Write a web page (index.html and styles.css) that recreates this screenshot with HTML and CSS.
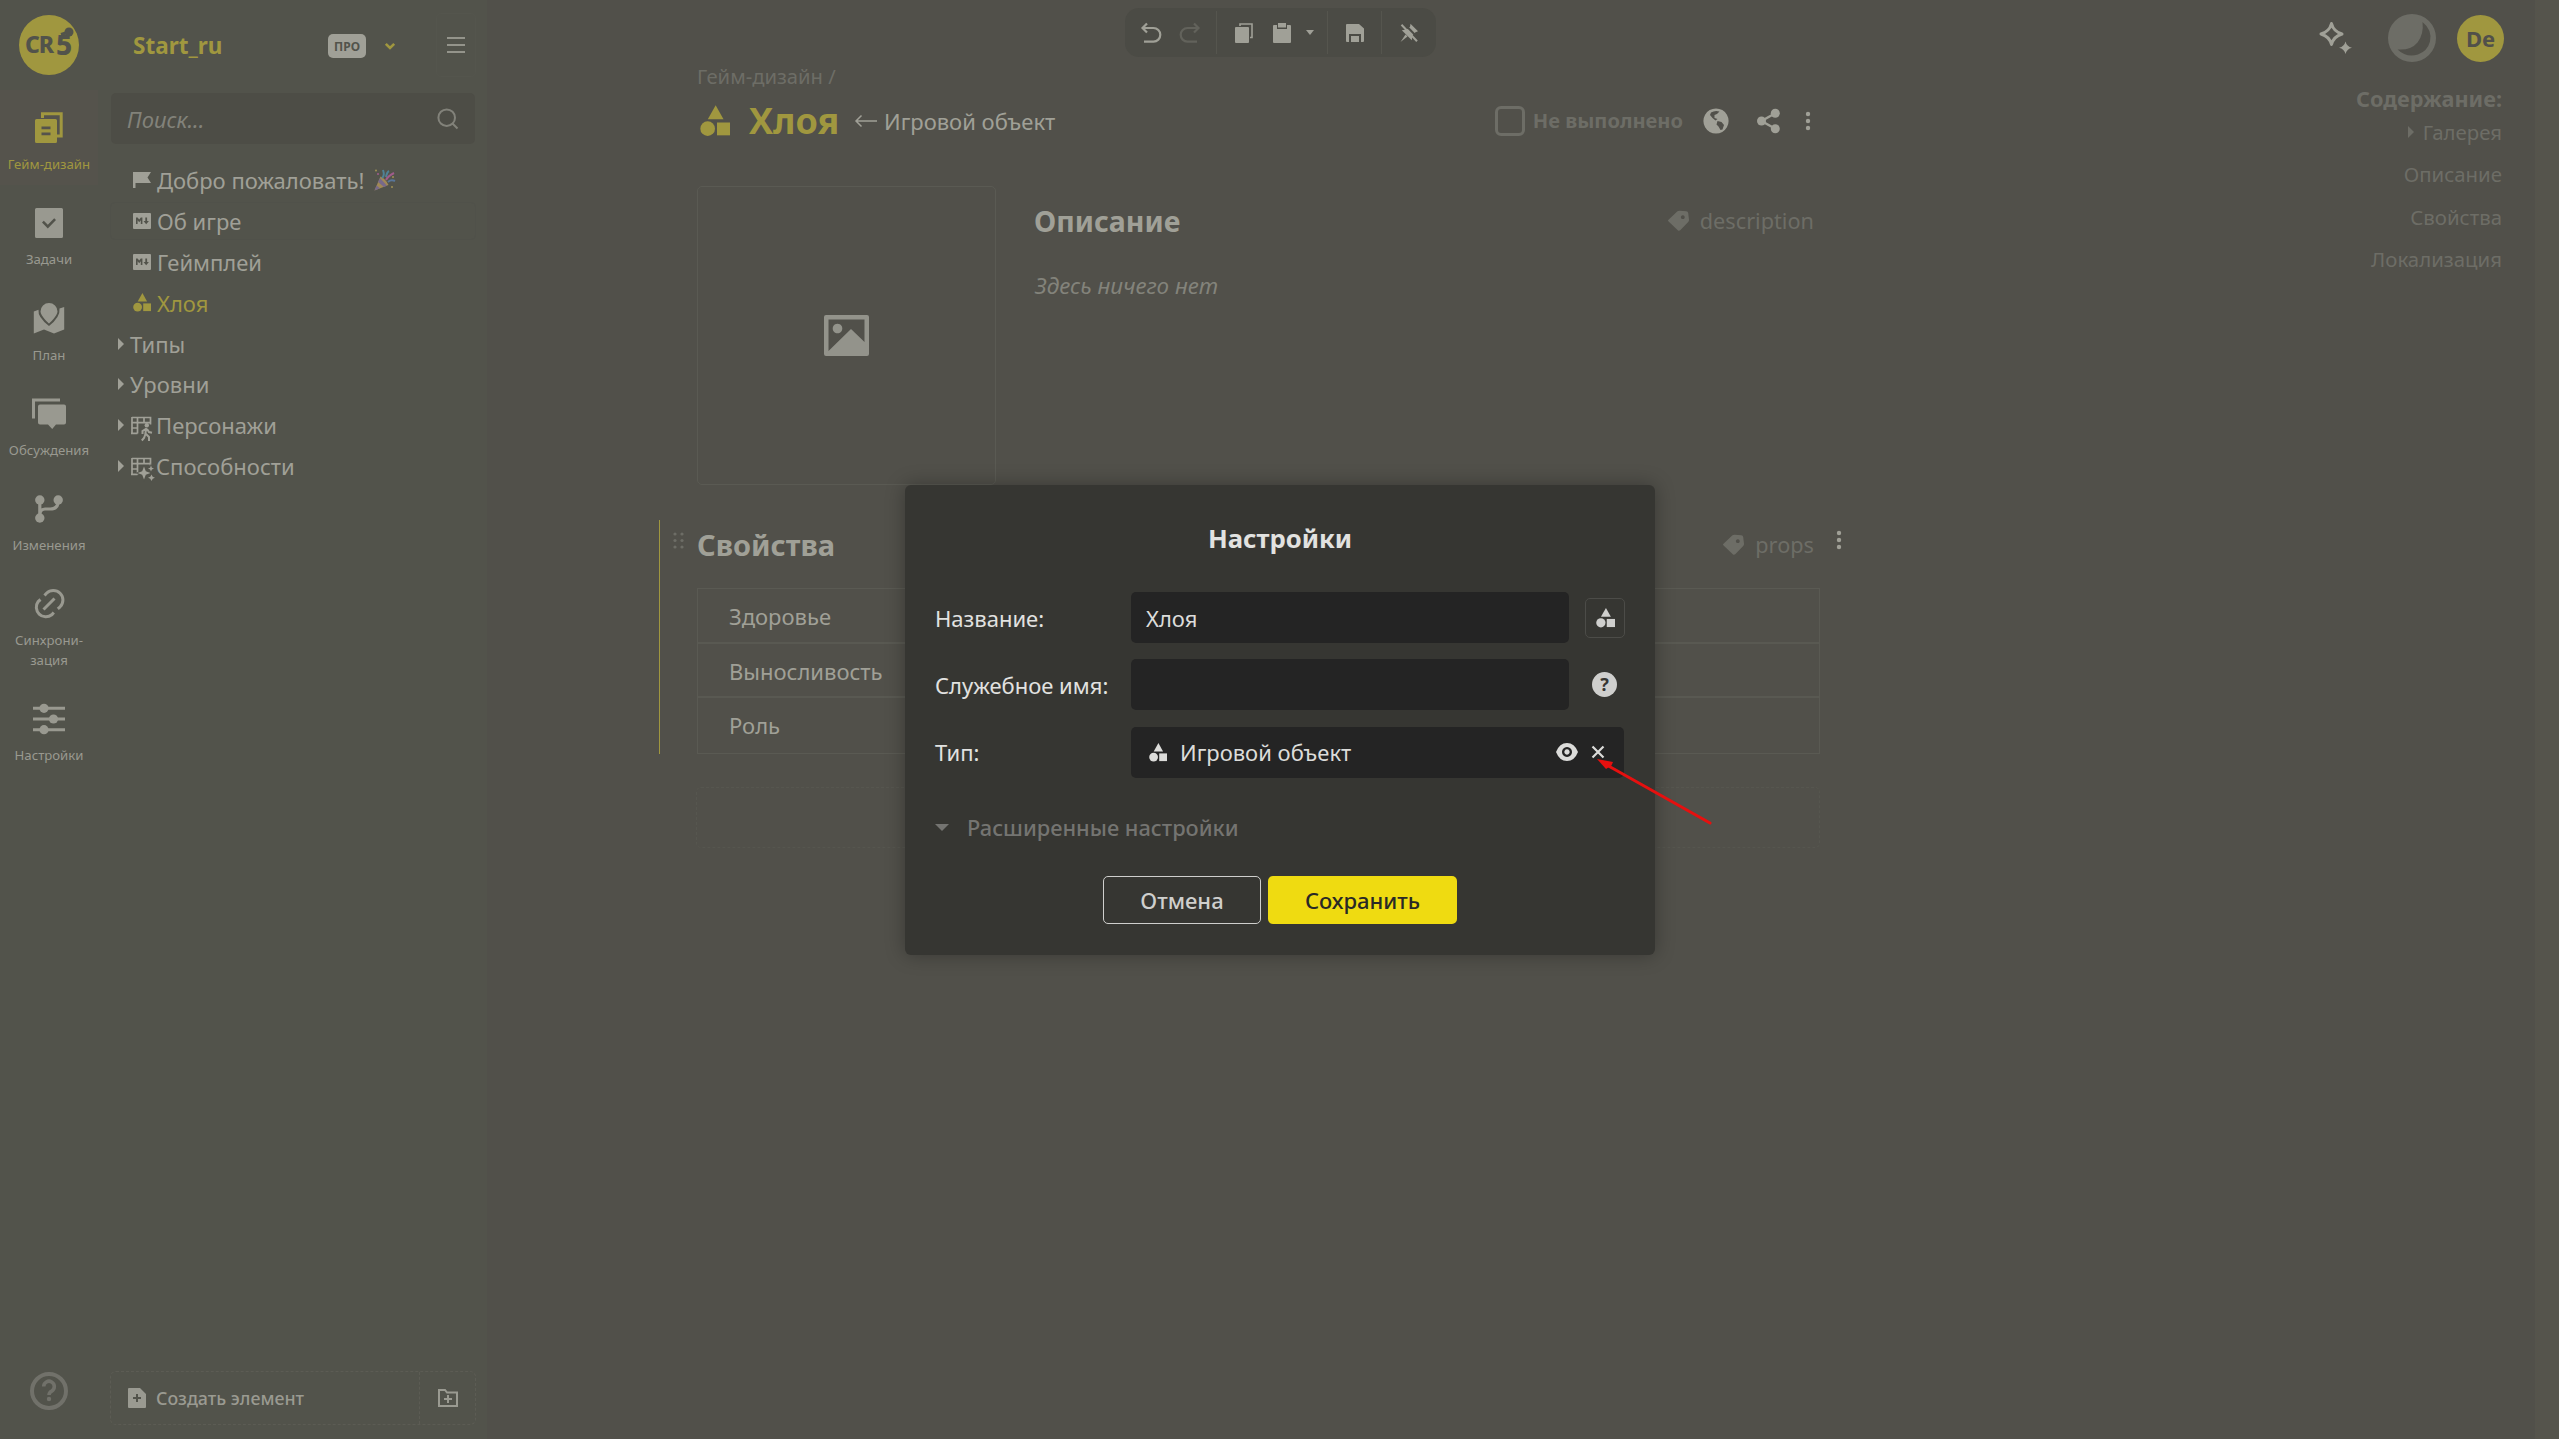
FILE: index.html
```
<!DOCTYPE html>
<html lang="ru">
<head>
  <meta charset="UTF-8" />
  <meta name="viewport" content="width=device-width, initial-scale=1.0"/>
  <title>Хлоя - Start_ru</title>
  <link rel="stylesheet" href="styles.css">
</head>
<body>
  <svg width="0" height="0" class="defs">
    <symbol id="shapes" viewBox="0 0 18 19"><path d="M9.4 0l4.7 8.4H4.7z"/><circle cx="4.6" cy="14.1" r="4.4"/><path d="M10.2 10.4H18v7.7h-7.8z"/></symbol>
    <symbol id="tag" viewBox="0 0 22 22"><path fill-rule="evenodd" d="M0 10.2L9.2 1.6Q10.2.7 11.6.8L18.3 1.2Q20 1.3 20.2 3L21 9.7Q21.2 11 20.2 12L12.2 20.3Q11 21.3 9.8 20.2L.6 11.5Q-.1 10.9 0 10.2zM14.8 5.3a1.9 1.9 0 1 0 .01 0z"/></symbol>
    <symbol id="dots" viewBox="0 0 6 20"><circle cx="3" cy="3" r="2.2"/><circle cx="3" cy="10" r="2.2"/><circle cx="3" cy="17" r="2.2"/></symbol>
    <symbol id="md" viewBox="0 0 18 16"><path fill-rule="evenodd" d="M1 0h16q1 0 1 1v14q0 1-1 1H1q-1 0-1-1V1q0-1 1-1zM3 4.5v6.5h1.6V7.3L6.2 9.3 7.8 7.3V11h1.6V4.5H7.8L6.2 6.6 4.6 4.5zM12.3 4.5V8h-1.8l2.7 3.2L15.9 8h-1.8V4.5z"/></symbol>
    <symbol id="grid" viewBox="0 0 24 24"><path d="M1 1.5h18.500v7M1 1v17M1 6.700h18.500M1 12h6M0 17.300h6.500M6.500 1.500v16M13 1.500v5" fill="none" stroke="currentColor" stroke-width="1.7"/></symbol>
  </svg>

  <nav class="rail">
    <svg class="logo" viewBox="0 0 60 60"><circle cx="30" cy="30" r="30"/><text x="6" y="38">CR</text><text x="37" y="40" class="five">5</text><path class="link" d="M42 19.500l8-2.500"/><circle class="spot" cx="50" cy="17" r="4.5"/></svg>
    <a class="rail-item active">
      <svg width="28" height="32" viewBox="0 0 28 32"><path d="M7.5 6V1.8H26.2V24H21" fill="none" stroke="currentColor" stroke-width="3"/><path fill-rule="evenodd" d="M1.5 7H20.5q1.5 0 1.5 1.5v21q0 1.5-1.5 1.5h-19Q0 31 0 29.5v-21Q0 7 1.5 7zM6.5 14.5v2.8h9v-2.8zm0 6v2.8h9v-2.8z"/></svg>
      <span>Гейм-дизайн</span>
    </a>
    <a class="rail-item">
      <svg width="28" height="32" viewBox="0 0 28 32"><path fill-rule="evenodd" d="M1.5 1h25Q28 1 28 2.5v27q0 1.5-1.5 1.5h-25Q0 31 0 29.5v-27Q0 1 1.5 1zM7 15.5l5.8 6L21 13l-1.8-1.8-6.4 6.5-4-4z"/></svg>
      <span>Задачи</span>
    </a>
    <a class="rail-item">
      <svg width="32" height="32" viewBox="0 0 32 32"><path d="M16 0a8.5 8.5 0 0 1 8.5 8.5C24.5 13 16 20.500 16 20.500S7.500 13 7.500 8.500A8.500 8.500 0 0 1 16 0z"/><path d="M.8 8.500L5.500 6.700Q4.500 14 16 23 27.500 14 26.500 5.500L31.200 4v22.500L21 30.500l-10-4L.8 30.500z"/></svg>
      <span>План</span>
    </a>
    <a class="rail-item">
      <svg width="34" height="32" viewBox="0 0 34 32"><path d="M1.5 20.500V2H28" fill="none" stroke="currentColor" stroke-width="3"/><path d="M8 6.500h24q2 0 2 2v16q0 2-2 2h-8l-3.800 4.500L16 26.500H8q-2 0-2-2v-16q0-2 2-2z"/></svg>
      <span>Обсуждения</span>
    </a>
    <a class="rail-item">
      <svg width="28" height="32" viewBox="0 0 28 32"><circle cx="4.8" cy="7" r="4.7"/><circle cx="23.2" cy="7" r="4.7"/><circle cx="4.8" cy="25" r="4.7"/><path d="M4.8 7v18M23.2 8q0 8-8 8H10q-4 0-5 4" fill="none" stroke="currentColor" stroke-width="3.2"/></svg>
      <span>Изменения</span>
    </a>
    <a class="rail-item">
      <svg class="line" width="32" height="32" viewBox="0 0 32 32" stroke-width="3"><path d="M11.500 7.500l2-2.300a9.600 9.600 0 0 1 13.600 13.600l-2.300 2M7.500 11.500l-2.300 2a9.600 9.600 0 0 0 13.600 13.300l2-2.300M10.500 21.500l11-11"/></svg>
      <span>Синхрони-<br>зация</span>
    </a>
    <a class="rail-item">
      <svg width="32" height="32" viewBox="0 0 32 32"><path d="M0 5.3h32M0 16h32M0 26.7h32" stroke="currentColor" stroke-width="3"/><circle cx="11" cy="5.3" r="4.6"/><circle cx="20.5" cy="16" r="4.6"/><circle cx="11" cy="26.7" r="4.6"/></svg>
      <span>Настройки</span>
    </a>
    <svg class="rail-help" viewBox="0 0 38 38"><circle cx="19" cy="19" r="17" fill="none" stroke="currentColor" stroke-width="4"/><path d="M13.7 14.5a5.3 5.3 0 1 1 8 4.6q-2.7 1.5-2.7 4" fill="none" stroke="currentColor" stroke-width="3.6"/><circle cx="19" cy="27" r="2.2"/></svg>
  </nav>

  <aside class="sidebar">
    <div class="project">
      <div class="project-name"><b>Start_ru</b><span class="badge">ПРО</span>
        <svg width="12" height="9" viewBox="0 0 12 9"><path d="M1.8 1.8L6 6l4.2-4.2" fill="none" stroke="currentColor" stroke-width="2.6"/></svg>
      </div>
      <div class="burger"><i></i><i></i><i></i></div>
    </div>
    <div class="search"><em>Поиск...</em>
      <svg class="line" width="22" height="22" viewBox="0 0 22 22" stroke-width="2"><circle cx="9.7" cy="9.7" r="8.3"/><path d="M15.5 15.5l5 5"/></svg>
    </div>
    <div class="tree">
      <div class="node"><svg width="18" height="18" viewBox="0 0 18 18"><path d="M0 1h18l-3.5 5.5L18 12H2.5v5H0z"/></svg><span class="w-long">Добро пожаловать!</span>
        <svg class="party" width="24" height="24" viewBox="0 0 24 24"><path d="M1.5 22.5L7.5 8.5q5 2 8 8.5z" fill="#a08856"/><path d="M1.5 22.5l2-5 3.5 2.8zM5 14l6 5 3-1.3L7 10z" fill="#77698a"/><path d="M9 10q3-2 1-8M13 9q1-5 3-6" stroke="#4f8297" stroke-width="2" fill="none"/><path d="M13 12q2-4 8-7" stroke="#a05c8b" stroke-width="2" fill="none"/><path d="M15 14q3-3 7-1" stroke="#58769a" stroke-width="2" fill="none"/><g fill="#a09054"><circle cx="3" cy="2.5" r="1"/><circle cx="19" cy="19" r="1"/><circle cx="20" cy="9" r="1"/></g><circle cx="5" cy="6" r="1" fill="#a05c8b"/></svg>
      </div>
      <div class="node hover"><svg width="18" height="16"><use href="#md"/></svg><span>Об игре</span></div>
      <div class="node"><svg width="18" height="16"><use href="#md"/></svg><span>Геймплей</span></div>
      <div class="node current"><svg width="18" height="19"><use href="#shapes"/></svg><span>Хлоя</span></div>
      <div class="node folder"><i class="arrow"></i><span>Типы</span></div>
      <div class="node folder"><i class="arrow"></i><span>Уровни</span></div>
      <div class="node folder"><i class="arrow"></i>
        <svg class="ent" width="24" height="24"><use href="#grid" width="24" height="24"/><g transform="translate(10 7)"><circle cx="5.8" cy="2.2" r="2.2"/><path d="M5.2 5l-1 7M4.7 6L1.5 8v3M6 6l2 3 3 .7M4.5 11L3 15 .8 17.5M5 11l3 3v4" fill="none" stroke="currentColor" stroke-width="2"/></g></svg>
        <span>Персонажи</span></div>
      <div class="node folder"><i class="arrow"></i>
        <svg class="ent" width="24" height="24"><use href="#grid" width="24" height="24"/><path class="halo" d="M13 9.500l1.800 4.700L19.500 16l-4.700 1.800L13 22.500l-1.800-4.700L6.500 16l4.700-1.800zM20 8.500l.9 2.200 2.100.8-2.100.9-.9 2.100-.9-2.100-2.100-.9 2.100-.8zM20.500 17.500l1.200 2.300 2.300 1-2.300 1-1.200 2.200-1.200-2.200-2.300-1 2.300-1z"/></svg>
        <span>Способности</span></div>
    </div>
    <div class="create">
      <div class="create-element"><svg width="18" height="20" viewBox="0 0 18 20"><path fill-rule="evenodd" d="M1 0h11l6 6v13q0 1-1 1H1q-1 0-1-1V1q0-1 1-1zM8 6v3H5v2h3v3h2v-3h3V9h-3V6z"/></svg><span>Создать элемент</span></div>
      <div class="create-folder"><svg class="line" width="20" height="18" viewBox="0 0 20 18" stroke-width="2"><path d="M1 1h6l2 2.500h10V17H1zM10 6v8M6 10h8"/></svg></div>
    </div>
  </aside>

  <main>
    <div class="content">
      <div class="crumbs">Гейм-дизайн /</div>
      <div class="heading">
        <svg width="30" height="32"><use href="#shapes"/></svg>
        <h1>Хлоя</h1>
        <span class="parent"><svg width="24" height="14" viewBox="0 0 24 14"><path d="M23 7H2M7.5 1.5L2 7l5.500 5.500" fill="none" stroke="currentColor" stroke-width="1.5"/></svg><span>Игровой объект</span></span>
        <span class="done"><i></i><b>Не выполнено</b></span>
        <svg class="globe" width="26" height="26" viewBox="0 0 26 26"><path fill-rule="evenodd" d="M13 .4a12.6 12.6 0 1 0 .01 0zM8 4.5q4-2.500 8.500-1l-2.500 2.500-2.500 1v3l3 1-2 1.500-3-2.500-2.500-3zM14.500 13l4 1 2.500 3-1.500 4.500-2 .5-2-3.500-2-2z"/></svg>
        <svg class="share" width="24" height="26" viewBox="0 0 24 26"><circle cx="4.5" cy="13" r="4.5"/><circle cx="18.3" cy="5.3" r="4.5"/><circle cx="18.3" cy="20.7" r="4.5"/><path d="M18.3 5.3L4.5 13l13.8 7.7" fill="none" stroke="currentColor" stroke-width="2.4"/></svg>
        <svg class="more" width="6" height="20"><use href="#dots"/></svg>
      </div>

      <div class="top-blocks">
        <div class="gallery"><svg width="45" height="41" viewBox="0 0 45 41"><path fill-rule="evenodd" d="M2 0h41q2 0 2 2v37q0 2-2 2H2q-2 0-2-2V2q0-2 2-2zM4.5 4.5v31.5L27 14l13.500 13V4.500zM13.500 8.700a4.800 4.800 0 1 0 .01 0z"/></svg></div>
        <section class="description">
          <div class="block-head"><h2>Описание</h2><span class="tag"><svg width="22" height="22"><use href="#tag"/></svg>description</span></div>
          <em>Здесь ничего нет</em>
        </section>
      </div>

      <section class="props">
        <div class="block-head">
          <svg class="drag" width="11" height="18" viewBox="0 0 11 18"><circle cx="2" cy="2" r="1.6"/><circle cx="9" cy="2" r="1.6"/><circle cx="2" cy="8.5" r="1.6"/><circle cx="9" cy="8.5" r="1.6"/><circle cx="2" cy="15" r="1.6"/><circle cx="9" cy="15" r="1.6"/></svg>
          <h2>Свойства</h2><span class="tag"><svg width="22" height="22"><use href="#tag"/></svg>props</span>
          <svg class="props-more" width="6" height="20"><use href="#dots"/></svg>
        </div>
        <div class="table">
          <div>Здоровье</div>
          <div>Выносливость</div>
          <div>Роль</div>
        </div>
      </section>
      <div class="add-block"></div>
    </div>

    <div class="right">
      <div class="user">
        <svg width="36" height="36" viewBox="0 0 36 36"><path d="M13.5 3.5q2 8 10.500 10.500-8.500 2.500-10.500 10.500Q11.500 16.500 3 14 11.500 11.500 13.500 3.500z" fill="none" stroke="currentColor" stroke-width="3" stroke-linejoin="round"/><path d="M27.500 21.500q1.200 5 6.500 6.300-5.300 1.200-6.500 6.200-1.200-5-6.500-6.200 5.300-1.300 6.500-6.300z"/></svg>
        <svg class="theme" width="48" height="48" viewBox="0 0 48 48"><circle cx="24" cy="24" r="24"/><path class="cut" d="M34.500 8q10 8 7.500 19.500-2.500 9.500-12 13-11.500 3.500-20.500-5 13.500 1 20-7 6.500-8.500 5-20.500z"/></svg>
        <span class="avatar">De</span>
      </div>
      <div class="toc">
        <b>Содержание:</b>
        <a class="first"><i class="arrow"></i>Галерея</a>
        <a>Описание</a>
        <a>Свойства</a>
        <a>Локализация</a>
      </div>
    </div>
  </main>
  <div class="scrollbar"></div>

  <div class="toolbar">
    <div class="tools history">
      <svg class="line" width="22" height="22" viewBox="0 0 22 22" stroke-width="2.2"><path d="M7 1.500L2.500 6 7 10.500M3 6h10.500a6.800 6.800 0 0 1 0 13.600H4"/></svg>
      <svg class="line off" width="22" height="22" viewBox="0 0 22 22" stroke-width="2.2"><path d="M15 1.500L19.500 6 15 10.500M19 6H8.500a6.800 6.800 0 0 0 0 13.600H18"/></svg>
    </div>
    <div class="tools clip">
      <svg width="18" height="20" viewBox="0 0 18 20"><path d="M5 3V1h12v13.500h-2" fill="none" stroke="currentColor" stroke-width="1.6"/><path d="M1 4h12q1 0 1 1v14q0 1-1 1H1q-1 0-1-1V5q0-1 1-1z"/></svg>
      <svg width="18" height="20" viewBox="0 0 18 20"><path d="M1 2h3v4h10V2h3q1 0 1 1v16q0 1-1 1H1q-1 0-1-1V3q0-1 1-1z"/><path d="M5 0h8v4.500H5z"/></svg>
      <i class="caret"></i>
    </div>
    <div class="tools save">
      <svg width="18" height="18" viewBox="0 0 18 18"><path fill-rule="evenodd" d="M1 0h12l5 4.500V17q0 1-1 1h-2v-8H3v8H1q-1 0-1-1V1q0-1 1-1z"/><path d="M5 12h8v6H5z"/></svg>
    </div>
    <div class="tools pin">
      <svg width="20" height="20" viewBox="0 0 20 20"><path d="M11.500.8l7.500 7.500-2.500 1-3 3-.7 4.900L2.800 7.200l5-.6L11 3.800zM6.500 11.500l2 2L1.500 19z"/><path d="M4.500 0l16 16.500" stroke="#4b4b45" stroke-width="2"/><path d="M2.500 1.800l15.500 16.500" stroke="currentColor" stroke-width="2"/></svg>
    </div>
  </div>

  <div class="dialog">
    <h3>Настройки</h3>
    <div class="row"><label>Название:</label><div class="input">Хлоя</div><div class="icon-btn"><svg width="19" height="20"><use href="#shapes"/></svg></div></div>
    <div class="row"><label>Служебное имя:</label><div class="input"></div><div class="hint">?</div></div>
    <div class="row"><label>Тип:</label><div class="input wide"><svg width="18" height="19"><use href="#shapes"/></svg><span>Игровой объект</span>
      <svg class="eye" width="22" height="18" viewBox="0 0 22 18"><path fill-rule="evenodd" d="M11 0Q18.500 0 22 9q-3.500 9-11 9T0 9Q3.500 0 11 0zM11 4a5 5 0 1 0 .01 0zM11 6.300a2.700 2.700 0 1 1-.01 0z"/></svg>
      <svg class="clear" width="14" height="14" viewBox="0 0 14 14"><path d="M1.500 1.500l11 11M12.500 1.500l-11 11" stroke="currentColor" stroke-width="2.2"/></svg></div></div>
    <div class="advanced"><i></i><span>Расширенные настройки</span></div>
    <div class="buttons"><button class="cancel">Отмена</button><button class="ok">Сохранить</button></div>
  </div>

  <svg class="pointer" width="120" height="72" viewBox="0 0 120 72"><path d="M10 9l105 59" stroke="#e6100f" stroke-width="3" stroke-linecap="round"/><path d="M2 4l16 3-1.500 3.500-5.500 3.500z" fill="#e6100f"/></svg>
</body>
</html>
```
FILE: styles.css
```
* { box-sizing: border-box; }
html, body { margin: 0; padding: 0; height: 100%; overflow: hidden; }
body { display: flex; background: #51504a; color: #a0a097; font-family: "Noto Sans", "Open Sans", sans-serif; font-size: 22px; line-height: 30px; }
svg { fill: currentColor; flex: none; overflow: visible; display: block; }
svg.line { fill: none; stroke: currentColor; }
h1, h2, h3 { margin: 0; }
span, b, em { white-space: nowrap; }
.defs { position: absolute; }

/* left rail */
.rail { width: 98px; height: 100%; background: #52534b; display: flex; flex-direction: column; align-items: center; padding-top: 15px; }
.logo { width: 60px; height: 60px; margin-bottom: 15px; color: #a0973f; }
.logo text { fill: #52534b; font-weight: 800; font-size: 23px; letter-spacing: -1px; }
.logo .five { font-size: 28px; }
.logo .spot { fill: #52534b; }
.logo .link { stroke: #52534b; stroke-width: 3; }
.rail-item { width: 98px; min-height: 95.3px; padding-top: 22px; display: flex; flex-direction: column; align-items: center; gap: 10px; font-size: 13.2px; line-height: 20px; text-align: center; flex: none; padding-bottom: 11px; color: #999990; }
.rail-item.active { background: #55534c; color: #a0973f; }
.rail-help { width: 38px; height: 38px; margin-top: auto; margin-bottom: 29px; color: #71716a; }

/* project tree */
.sidebar { width: 389px; background: #52534b; padding: 13px 11px 14px 12px; display: flex; flex-direction: column; }
.project { display: flex; height: 64px; gap: 6px; }
.project-name { flex: 1; display: flex; align-items: center; padding-left: 23px; color: #a0973f; font-size: 22.5px; }
.project-name b { padding-top: 1px; }
.project-name svg { margin-left: 18px; margin-right: 34px; margin-top: 2px; }
.badge { margin-left: auto; margin-top: 2px; width: 38px; height: 24px; border-radius: 5px; background: #a0a097; color: #52534b; font-size: 12px; font-weight: 700; line-height: 25px; text-align: center; }
.burger { width: 40px; display: flex; flex-direction: column; gap: 5px; align-items: center; justify-content: center; border: 1px solid #54554d; border-radius: 5px; }
.burger i { width: 18px; height: 2px; background: #94948b; }
.search { margin: 16px 1px 0; height: 51px; border-radius: 5px; background: #4d4d46; display: flex; align-items: center; justify-content: space-between; padding: 0 16px; color: #82827a; }
.tree { margin-top: 17px; }
.node { height: 38px; margin-bottom: 2.9px; padding-left: 22px; display: flex; align-items: center; gap: 6px; border: 1px solid transparent; border-radius: 5px; }
.node.hover { border-color: #50514a; }
.node.current { color: #a0973f; }
.party { margin-left: 3px; }
.folder { padding-left: 7px; gap: 0; }
.arrow { width: 0; height: 0; border-left: 6px solid currentColor; border-top: 6px solid transparent; border-bottom: 6px solid transparent; margin-right: 6px; }
.ent { margin: 6px 0 0 1px; }
.ent + span { margin-left: 1px; }
.halo { stroke: #52534b; stroke-width: 1.5; paint-order: stroke; }
.create { margin-top: auto; height: 54px; border: 1px dashed #5c5c54; border-radius: 6px; display: flex; font-size: 17.8px; font-weight: 500; color: #9a9a91; }
.create-element { flex: 1; display: flex; align-items: center; gap: 10px; padding-left: 17px; }
.create-folder { width: 56px; border-left: 1px dashed #5c5c54; display: flex; align-items: center; justify-content: center; }

/* page */
main { flex: 1; display: flex; justify-content: space-between; }
.content { width: 1124px; margin-left: 209px; padding-top: 61px; }
.crumbs { color: #6d6d66; height: 30px; font-size: 20.2px; padding-left: 1px; }
.heading { height: 40px; margin-top: 10px; display: flex; align-items: center; }
.heading > svg:first-child { color: #a0973f; margin-left: 4px; }
h1 { color: #a0973f; font-size: 36px; line-height: 40px; margin-left: 19px; width: 92px; }
.parent { display: flex; align-items: center; gap: 6px; margin-left: 13px; }
.done { margin-left: auto; display: flex; align-items: center; gap: 8px; color: #6d6d66; font-size: 20.1px; }
.done i { width: 30px; height: 30px; border: 3px solid #6d6d66; border-radius: 6px; }
.globe { margin-left: 20px; }
.share { margin-left: 28px; }
.more { margin-left: 24px; margin-right: 9px; }
.top-blocks { display: flex; margin-top: 45px; height: 299px; }
.gallery { width: 299px; border: 1px solid #5a5a53; border-radius: 5px; display: flex; align-items: center; justify-content: center; color: #93938b; margin-left: 1px; }
.description { flex: 1; padding: 14px 6px 0 38px; }
.description em { display: block; margin-top: 29px; margin-left: 1px; color: #83837b; font-size: 22.4px; }
.block-head { display: flex; align-items: center; justify-content: space-between; height: 42px; }
h2 { font-size: 28.5px; line-height: 40px; }
.tag { display: flex; align-items: center; gap: 10px; color: #6d6d66; font-size: 21.7px; }
.props { margin: 35px 0 0 -37px; padding-left: 36px; border-left: 1px solid #a0973f; height: 234px; position: relative; }
.props .block-head { padding: 10px 6px 0 1px; height: 68px; align-items: flex-start; }
.props h2 { line-height: 30px; font-size: 29px; }
.drag { position: absolute; left: 13px; top: 12px; color: #6d6d66; }
.props-more { position: absolute; right: -22px; top: 10px; }
.table { border: 1px solid #5a5a53; margin-left: 1px; }
.table div { height: 54.7px; line-height: 54px; padding-left: 31px; border-bottom: 2px solid #595952; }
.table div:last-child { border-bottom: 0; }
.add-block { margin-top: 33px; height: 61px; border: 1px dashed #56564f; border-radius: 5px; }

.right { width: 260px; padding: 14px 33px 0 0; }
.user { display: flex; align-items: center; justify-content: flex-end; }
.theme { margin-left: 34px; color: #6d6d66; }
.cut { fill: #51504a; }
.avatar { margin-left: 21px; margin-right: -2px; width: 47px; height: 47px; border-radius: 50%; background: #a0973f; color: #51504a; font-weight: 700; text-align: center; line-height: 47px; font-size: 22px; }
.toc { display: flex; flex-direction: column; align-items: flex-end; color: #6d6d66; margin-top: 22px; font-size: 20.4px; }
.toc b { font-size: 21.7px; }
.toc a { height: 42.4px; display: flex; align-items: center; }
.toc .first { height: 36px; margin-bottom: 3px; }
.toc .arrow { margin-right: 9px; }
.scrollbar { width: 24px; background: #55544c; }

/* floating toolbar */
.toolbar { position: absolute; top: 8px; left: 1125px; width: 311px; height: 49px; border-radius: 14px; background: #4b4b45; display: flex; padding: 3px 0; color: #a0a097; }
.tools { display: flex; align-items: center; justify-content: center; border-left: 1px solid #55554e; }
.history { width: 91px; gap: 17px; border: 0; }
.off { color: #62625b; }
.clip { width: 111px; gap: 20px; padding-left: 4px; }
.caret { border-top: 5px solid currentColor; border-left: 4px solid transparent; border-right: 4px solid transparent; margin-left: -5px; }
.save { width: 54px; }
.pin { width: 54px; }

/* settings dialog */
.dialog { position: absolute; left: 905px; top: 485px; width: 750px; height: 470px; padding: 34px 30px 30px; border-radius: 6px; background: #363632; color: #e2e2e0; box-shadow: 0 0 20px rgba(0, 0, 0, 0.3); }
h3 { font-size: 25.7px; line-height: 40px; text-align: center; margin-bottom: 33px; }
.row { display: flex; align-items: center; height: 51px; margin-bottom: 16.4px; }
.row label { width: 196px; white-space: nowrap; }
.input { width: 438px; height: 51px; border-radius: 5px; background: #242424; padding-left: 15px; display: flex; align-items: center; color: #dcdcda; }
.input.wide { width: 493px; padding-left: 18px; padding-right: 19px; margin-right: -4px; }
.input.wide span { margin-left: 13px; }
.eye { margin-left: auto; }
.clear { margin-left: 13px; }
.icon-btn { margin-left: 16px; width: 40px; height: 40px; border: 1px solid #4c4c48; border-radius: 5px; display: flex; align-items: center; justify-content: center; color: #cfcfcd; }
.hint { margin-left: 23px; width: 25px; height: 25px; border-radius: 50%; background: #cfcfcd; color: #363632; font-size: 18px; font-weight: 700; line-height: 25px; text-align: center; }
.advanced { display: flex; align-items: center; height: 30px; margin-top: 35px; color: #747471; font-weight: 500; font-size: 21.8px; }
.advanced i { border-top: 7px solid currentColor; border-left: 7px solid transparent; border-right: 7px solid transparent; margin-right: 18px; }
.buttons { display: flex; justify-content: center; gap: 7px; margin-top: 33.5px; }
button { height: 48px; padding: 0; border-radius: 5px; font: inherit; font-weight: 500; }
.cancel { width: 158px; background: none; border: 1px solid #cfcfcd; color: #cfcfcd; }
.ok { width: 189px; background: #efdb11; border: 0; color: #292926; }

.pointer { position: absolute; left: 1595px; top: 755px; }
```
